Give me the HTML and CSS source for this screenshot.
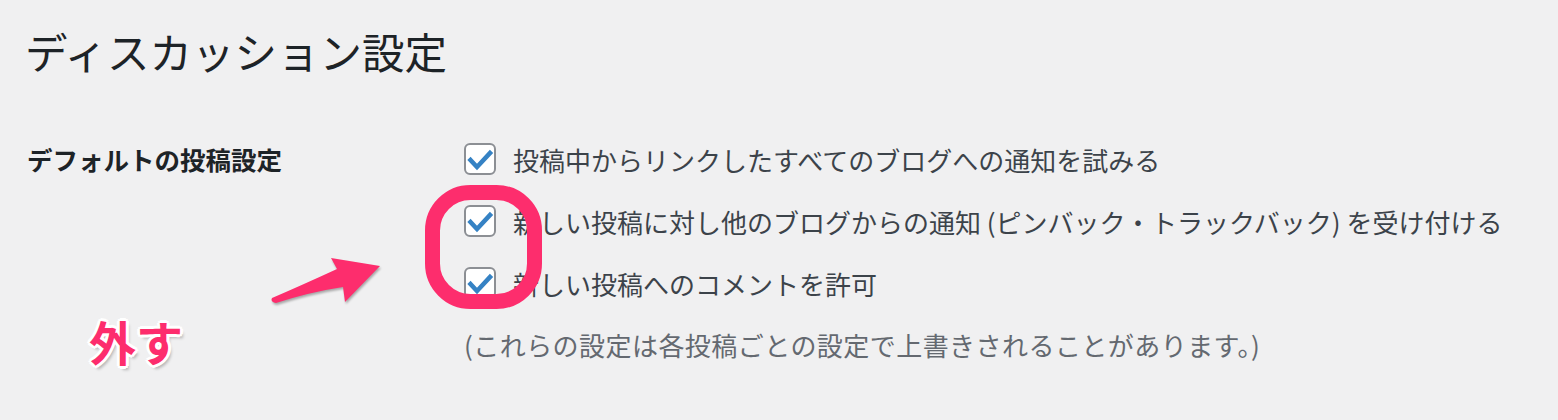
FILE: index.html
```html
<!DOCTYPE html>
<html lang="ja">
<head>
  <meta charset="UTF-8" />
  <title>ディスカッション設定</title>
  <link rel="stylesheet" href="styles.css">
</head>
<body>

  <h1 class="page-title">ディスカッション設定</h1>

  <!-- Réglages par défaut des articles -->
  <div class="form-table">
    <div class="row-label">デフォルトの投稿設定</div>
    <div class="row-fields">
      <label class="check-row">
        <span class="checkbox"><svg viewBox="0 0 32 32"><path d="M6.5 17 L13 24 L26 10" /></svg></span>
        投稿中からリンクしたすべてのブログへの通知を試みる
      </label>
      <label class="check-row">
        <span class="checkbox"><svg viewBox="0 0 32 32"><path d="M6.5 17 L13 24 L26 10" /></svg></span>
        新しい投稿に対し他のブログからの通知 (ピンバック・トラックバック) を受け付ける
      </label>
      <label class="check-row">
        <span class="checkbox"><svg viewBox="0 0 32 32"><path d="M6.5 17 L13 24 L26 10" /></svg></span>
        新しい投稿へのコメントを許可
      </label>
      <p class="description">(これらの設定は各投稿ごとの設定で上書きされることがあります。)</p>
    </div>
  </div>

  <!-- Annotations : cadre, flèche et légende -->
  <svg class="markup" viewBox="0 0 1558 420" width="1558" height="420">
    <rect class="ring" x="432.5" y="192.5" width="102" height="109" rx="38" />
    <path class="arrow" d="M272 298 Q300 286 337 269 L331 258 L380 266 L345 302 L343 287 Q310 292 276 303 Q270 302 272 298 Z" />
  </svg>
  <span class="callout">外す</span>

</body>
</html>
```

FILE: styles.css
```css
:root {
  --bg: #f0f0f1;
  --text: #1d2327;
  --body-text: #3c434a;
  --muted: #646970;
  --accent: #3582c4;
  --pink: #fd2d6d;
}

body {
  margin: 0;
  padding: 23px 27px 0;
  background: var(--bg);
  color: var(--body-text);
  font-family: "Noto Sans CJK JP", "Noto Sans", sans-serif;
  position: relative; /* repère pour les annotations */
  height: 397px;
  overflow: hidden;
}

.page-title {
  margin: 0 0 0 -2px;
  font-size: 42.5px;
  font-weight: 400;
  line-height: 55px;
  color: var(--text);
}

.form-table {
  display: grid;
  grid-template-columns: 437px 1fr;
  margin-top: 50px;
}

.row-label {
  font-size: 25.5px;
  font-weight: 700;
  line-height: 62px;
  color: var(--text);
}

.row-fields {
  display: flex;
  flex-direction: column;
}

.check-row {
  display: flex;
  align-items: center;
  gap: 17px;
  height: 62px;
  font-size: 26px;
  white-space: nowrap;
}

/* Case à cocher façon WordPress */
.checkbox {
  width: 32px;
  height: 32px;
  box-sizing: border-box;
  border: 2px solid #8c8f94;
  border-radius: 6px;
  background: #fff;
  flex-shrink: 0;
  position: relative;
}

.checkbox svg {
  position: absolute;
  top: -2px;
  left: -2px;
  width: 32px;
  height: 32px;
}

.checkbox path {
  fill: none;
  stroke: var(--accent);
  stroke-width: 4.5;
  stroke-linecap: square;
}

.description {
  margin: 0;
  height: 62px;
  line-height: 62px;
  font-size: 26px;
  letter-spacing: 0.45px;
  color: var(--muted);
  white-space: nowrap;
}

/* Couche d’annotation */
.markup {
  position: absolute;
  top: 0;
  left: 0;
  pointer-events: none;
}

.ring {
  fill: none;
  stroke: var(--pink);
  stroke-width: 15;
}

.arrow {
  fill: var(--pink);
  filter: drop-shadow(1px 2px 1px rgba(0,0,0,0.3));
}

.callout {
  position: absolute;
  left: 89px;
  top: 313px;
  font-size: 47px;
  font-weight: 700;
  line-height: 56px;
  color: var(--pink);
  text-shadow:
    3px 0 0 #fff, -3px 0 0 #fff, 0 3px 0 #fff, 0 -3px 0 #fff,
    2px 2px 0 #fff, -2px 2px 0 #fff, 2px -2px 0 #fff, -2px -2px 0 #fff,
    3px 4px 3px rgba(0,0,0,0.25);
}
```
